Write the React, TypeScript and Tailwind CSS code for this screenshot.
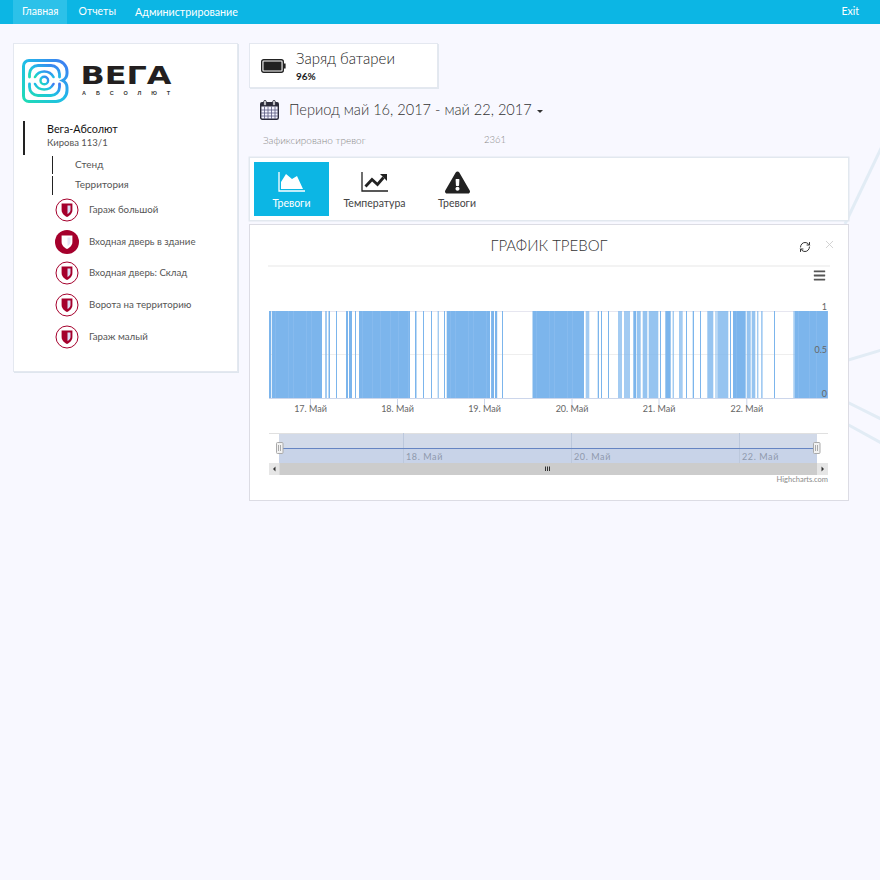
import React from "react";
import { FaExclamationTriangle, FaBars } from "react-icons/fa";
import { RefreshCw, X } from "lucide-react";

const font = { fontFamily: '"Lato","Noto Sans","Open Sans",sans-serif' };

const sensors = [
  { t: "Гараж большой", on: false, cls: "mb-[10px]" },
  { t: "Входная дверь в здание", on: true, cls: "mb-[9px]" },
  { t: "Входная дверь: Склад", on: false, cls: "mb-[10px]" },
  { t: "Ворота на территорию", on: false, cls: "mb-[10px]" },
  { t: "Гараж малый", on: false, cls: "" },
];

const SHIELD = "M6.600 5.500h10.800v6.500c0 3.400-2.500 5.500-5.400 7-2.900-1.500-5.400-3.600-5.400-7z";

function Shield({ on }: { on: boolean }) {
  return (
    <svg width="24" height="24" viewBox="0 0 24 24" className="shrink-0">
      <circle cx="12" cy="12" r={on ? 12 : 11} fill={on ? "#a5002c" : "#fff"} stroke="#a5002c" strokeWidth={on ? 0 : 1} />
      <path d={SHIELD} fill={on ? "#fff" : "#a5002c"} />
      {on ? (
        <path d="M12.500 7.500h3v4.500c0 1.700-1.300 2.900-3 4z" fill="#e4e4f6" />
      ) : (
        <path d="M12.500 7.500h3v4.500c0 1.700-1.300 2.900-3 4z" fill="#dcdcf4" />
      )}
    </svg>
  );
}

function Logo() {
  return (
    <div className="flex items-start">
      <svg width="48" height="44" viewBox="0 0 48 44" className="shrink-0">
        <defs>
          <linearGradient id="lg" x1="0" y1="1" x2="1" y2="0">
            <stop offset="0" stopColor="#1fdcb4" />
            <stop offset="0.5" stopColor="#20bce8" />
            <stop offset="1" stopColor="#4079f2" />
          </linearGradient>
        </defs>
        <g fill="none" stroke="url(#lg)" strokeLinecap="round">
          <path strokeWidth="3" d="M7 1.500h27a11 11 0 0 1 11 11v2a8 8 0 0 1-4.500 7a8 8 0 0 1 4.500 7v3a11 11 0 0 1-11 11H7a5.500 5.500 0 0 1-5.500-5.500V7A5.500 5.500 0 0 1 7 1.500z" />
          <path strokeWidth="2.800" d="M7.500 18v-3a8.500 8.500 0 0 1 8.500-8.500h13a8.500 8.500 0 0 1 8.500 8.500v3" />
          <path strokeWidth="2.800" d="M7.500 25v3a8.500 8.500 0 0 0 8.500 8.500h13a8.500 8.500 0 0 0 8.500-8.500v-3" />
          <path strokeWidth="2.600" d="M13 18a10.500 10.500 0 0 1 18.500 0" />
          <path strokeWidth="2.600" d="M13 25a10.500 10.500 0 0 0 18.500 0" />
          <circle cx="22.300" cy="21.500" r="3.800" strokeWidth="2.400" />
        </g>
      </svg>
      <div className="ml-[10px] mt-[5px] flex flex-col">
        <svg width="94" height="36" viewBox="0 0 94 36" className="overflow-visible">
          <text x="0.500" y="19.500" textLength="91" lengthAdjust="spacingAndGlyphs" fontFamily="DejaVu Sans" fontWeight="700" fontSize="25" fill="#231f20">ВЕГА</text>
          <text x="2" y="31" textLength="88" fontFamily="Liberation Sans" fontSize="5.500" fontWeight="700" fill="#3a3a3a">АБСОЛЮТ</text>
        </svg>
      </div>
    </div>
  );
}

const bars: [number, number, number?][] = [
  [269, 271], [271.8, 322], [325, 327, 0.7], [328.5, 330], [336, 337], [346, 348], [349, 352], [355, 356],
  [359, 410], [415, 416.5], [423, 424], [431, 432], [437.7, 438.7], [444, 445], [446.7, 490], [491, 494], [495, 497.2],
  [502, 503], [532.5, 584], [585.7, 589.3, 0.7], [597.7, 599], [601, 602], [608, 609], [618, 622, 0.7],
  [624, 630, 0.7], [633.3, 636], [636.7, 640.7, 0.8], [642.7, 647.3, 0.8], [648.7, 658.3, 0.8], [660, 661],
  [665.3, 670.7], [672.7, 673.7], [679, 682.7, 0.7], [686, 687], [692.7, 694], [700, 701], [707.3, 713.3, 0.8],
  [715.5, 716.5], [717.3, 728.3, 0.8], [730, 731], [733, 745.7], [746.7, 750.7, 0.8], [751.7, 755.3, 0.8],
  [757.3, 758.3], [761, 762.7, 0.7], [774, 775], [793.3, 794.5, 0.7], [794.5, 828],
];

// thin lighter stripes inside the dense stretches of the series
const stripes: number[] = [];
for (const [a, b] of [[272, 322], [359, 410], [447, 497], [533, 584], [733, 745], [795, 828]] as [number, number][]) {
  for (let x = a + 3; x < b; x += 5 + ((x * 7) % 9)) stripes.push(x);
}

const ticks = [
  { x: 310.5, t: "17. Май" },
  { x: 397.5, t: "18. Май" },
  { x: 484.5, t: "19. Май" },
  { x: 572, t: "20. Май" },
  { x: 659, t: "21. Май" },
  { x: 746.8, t: "22. Май" },
];

function Chart() {
  const ox = 250;
  const oy = 262;
  return (
    <svg width="598" height="224" viewBox={`${ox} ${oy} 598 224`} className="block" fontFamily='"Lato","Noto Sans",sans-serif'>
      <line x1="269" x2="828" y1={311.5} y2={311.5} stroke="#e6e6f0" />
      <line x1="269" x2="828" y1={354.5} y2={354.5} stroke="#eeeeee" />
      {bars.map(([a, b, o], i) => (
        <rect key={i} x={a} y={311} width={b - a} height={88} fill="#7cb5ec" opacity={o ?? 1} />
      ))}
      {stripes.map((x) => (
        <rect key={x} x={x} y={311} width={1} height={88} fill="#8fc0ef" opacity="0.5" />
      ))}
      <line x1="269" x2="828" y1={398.5} y2={398.5} stroke="#ccd6eb" />
      {ticks.map((k) => (
        <g key={k.x}>
          <line x1={k.x} x2={k.x} y1="399" y2="405" stroke="#ccd6eb" />
          <text x={k.x} y="412" textAnchor="middle" fontSize="9" fill="#666">{k.t}</text>
        </g>
      ))}
      <text x="827" y="310" textAnchor="end" fontSize="9" fill="#666">1</text>
      <text x="827" y="353" textAnchor="end" fontSize="9" fill="#666">0.5</text>
      <text x="827" y="397" textAnchor="end" fontSize="9" fill="#666">0</text>

      {/* navigator */}
      <rect x="279" y="433" width="538" height="30" fill="#c8d3e8" />
      <rect x="279" y="433" width="538" height="15" fill="#d2dae9" />
      <rect x="269" y="433" width="559" height="1" fill="#e0e0e0" />
      {[403.5, 571.5, 739.5].map((x) => (
        <line key={x} x1={x} x2={x} y1="433" y2="463" stroke="#bcc8dc" />
      ))}
      {[
        { x: 406, t: "18. Май" },
        { x: 574, t: "20. Май" },
        { x: 742, t: "22. Май" },
      ].map((k) => (
        <text key={k.x} x={k.x} y="460" fontSize="9" letterSpacing="0.6" fill="#8f99ad">{k.t}</text>
      ))}
      <line x1="279" x2="817" y1="448.500" y2="448.500" stroke="#6685c2" strokeWidth="1.200" />
      {[279.5, 816.5].map((x) => (
        <g key={x}>
          <rect x={x - 3} y="442.500" width="6.500" height="11" rx="1" fill="#f2f2f2" stroke="#aaa" />
          <line x1={x - 1} x2={x - 1} y1="445" y2="451" stroke="#aaa" />
          <line x1={x + 1} x2={x + 1} y1="445" y2="451" stroke="#aaa" />
        </g>
      ))}
      {/* scrollbar */}
      <rect x="269" y="463" width="559" height="12" fill="#cccccc" />
      <rect x="269" y="463" width="10.500" height="12" fill="#e6e6e6" />
      <rect x="817" y="463" width="11" height="12" fill="#e6e6e6" />
      <path d="M275.500 466.500v5l-2.500-2.500z" fill="#333" />
      <path d="M821.500 466.500v5l2.500-2.500z" fill="#333" />
      <path d="M545.500 466.500v4.500M547.500 466.500v4.500M549.500 466.500v4.500" stroke="#333" />
      <text x="828" y="481.500" textAnchor="end" fontSize="7.500" fill="#8a8a8a">Highcharts.com</text>
    </svg>
  );
}

function CalendarIcon() {
  return (
    <svg width="19" height="20" viewBox="0 0 19 20" className="shrink-0">
      <rect x="0.700" y="2.700" width="17.600" height="16.600" rx="1.500" fill="#f4f4ff" stroke="#2b2b3a" strokeWidth="1.400" />
      <rect x="0.700" y="2.700" width="17.600" height="3.800" fill="#2b2b3a" />
      <rect x="3.800" y="0.500" width="2.400" height="5" rx="1" fill="#fff" stroke="#2b2b3a" strokeWidth="1" />
      <rect x="12.800" y="0.500" width="2.400" height="5" rx="1" fill="#fff" stroke="#2b2b3a" strokeWidth="1" />
      <path d="M1 10h17M1 13h17M1 16h17M4.500 6.500v12.500M8 6.500v12.500M11.500 6.500v12.500M15 6.500v12.500" stroke="#5a5a82" strokeWidth="0.800" />
    </svg>
  );
}

function AreaIcon() {
  return (
    <svg width="28" height="22" viewBox="0 0 28 22" className="shrink-0">
      <path d="M1 1v19h26" fill="none" stroke="currentColor" strokeWidth="1.300" />
      <path d="M3 18v-7l5-8 6 5 5-3 6 13z" fill="currentColor" />
    </svg>
  );
}

function LineIcon() {
  return (
    <svg width="28" height="22" viewBox="0 0 28 22" className="shrink-0">
      <path d="M1 1v19h26" fill="none" stroke="#222" strokeWidth="1.300" />
      <path d="M4.500 15.500l6.500-7 5.500 5 6-7" fill="none" stroke="#222" strokeWidth="2.800" />
      <path d="M19 3h7v7z" fill="#222" />
    </svg>
  );
}

export default function App() {
  return (
    <div className="relative min-h-[880px] w-[880px] overflow-hidden bg-[#f8f8ff] text-[#333]" style={font}>
      {/* background rays */}
      <svg width="880" height="880" className="absolute left-0 top-0" viewBox="0 0 880 880">
        <g stroke="#e2ecf5" strokeWidth="3" fill="none">
          <path d="M885 140L845 224" />
          <path d="M845 361L885 349" />
          <path d="M845 401L885 421" />
          <path d="M845 423L885 445" />
        </g>
      </svg>

      <nav className="relative flex h-6 items-stretch bg-[#0cb6e4] pl-[13px] pr-[21px] text-[10.500px] text-white">
        <div className="flex items-center bg-[#2cc1e9] pl-[9px] pr-[8px]">Главная</div>
        <div className="flex items-center pl-[12px] pr-[19px]">Отчеты</div>
        <div className="flex items-center text-[10.700px]">Администрирование</div>
        <div className="ml-auto flex items-center">Exit</div>
      </nav>

      <div className="relative flex items-start pl-[14px] pt-[20px]">
        {/* left panel */}
        <aside className="h-[327px] w-[223px] shrink-0 bg-white pl-[8px] pt-[15px] shadow-[0_0_0_1px_#e4e8f0,1px_1px_0_1px_#dfe6ee]">
          <Logo />
          <div className="ml-[1px] mt-[18px] h-[34px] border-l-2 border-[#222] pl-[22px]">
            <div className="text-[10.800px] leading-[15px] text-[#111]">Вега-Абсолют</div>
            <div className="text-[9.500px] leading-[13px] text-[#555]">Кирова 113/1</div>
          </div>
          <div className="ml-[30px] mt-[1px] h-[18px] border-l border-[#222] pl-[22px] text-[10px] leading-[16px] text-[#555]">Стенд</div>
          <div className="ml-[30px] mt-[2px] h-[19px] border-l border-[#222] pl-[22px] text-[10px] leading-[16px] text-[#555]">Территория</div>
          <div className="ml-[33px] mt-[4px] flex flex-col">
            {sensors.map((s) => (
              <div key={s.t} className={`flex h-[22px] items-center ${s.cls}`}>
                <Shield on={s.on} />
                <span className="ml-[10px] -translate-y-[1px] text-[9.700px] text-[#555]">{s.t}</span>
              </div>
            ))}
          </div>
        </aside>

        {/* right column */}
        <main className="ml-[12px] flex w-[600px] flex-col">
          <div className="ml-[1px] flex h-[43px] w-[187px] items-start bg-white pl-[11px] shadow-[0_0_0_1px_#e4e8f0,1px_1px_0_1px_#e2e8ef]">
            <svg width="25" height="14" viewBox="0 0 25 14" className="mt-[15px] shrink-0">
              <rect x="0.700" y="0.700" width="21.600" height="12.600" rx="2" fill="#fff" stroke="#222" strokeWidth="1.400" />
              <rect x="2.500" y="2.500" width="18" height="9" fill="#222" />
              <rect x="23" y="4.500" width="1.600" height="5" fill="#222" />
            </svg>
            <div className="ml-[10px] flex flex-col pt-[4px]">
              <span className="text-[15px] font-light leading-[20px] text-[#222]">Заряд батареи</span>
              <span className="mt-[1px] text-[10px] font-bold leading-[14px] text-[#222]">96%</span>
            </div>
          </div>

          <div className="ml-[11px] mt-[11px] flex h-[24px] items-center">
            <CalendarIcon />
            <span className="ml-[10px] text-[14.600px] font-light text-[#333]">Период май 16, 2017 - май 22, 2017</span>
            <span className="ml-[5px] mt-[2px] border-x-[3px] border-t-[3px] border-x-transparent border-t-[#333]" />
          </div>

          <div className="ml-[14px] mt-[9px] flex h-[18px] items-center text-[10px] font-light text-[#888]">
            <span className="w-[221px]">Зафиксировано тревог</span>
            <span className="text-[9.500px]">2361</span>
          </div>

          <div className="ml-[1px] mt-[9px] flex h-[62px] w-[598px] items-center bg-white pl-[4px] shadow-[0_0_0_1.500px_#e2e8ef]">
            <div className="flex h-[54px] w-[75px] flex-col items-center bg-[#0cb6e4] pt-[9px] text-white">
              <AreaIcon />
              <span className="mt-[3px] text-[10.500px]">Тревоги</span>
            </div>
            <div className="flex h-[54px] w-[91px] flex-col items-center pt-[9px]">
              <LineIcon />
              <span className="mt-[3px] text-[10.500px] text-[#444]">Температура</span>
            </div>
            <div className="flex h-[54px] w-[74px] flex-col items-center pt-[8px] text-[#222]">
              <FaExclamationTriangle size={25} />
              <span className="mt-[1px] text-[10.500px] text-[#444]">Тревоги</span>
            </div>
          </div>

          <div className="mt-[4px] h-[277px] w-[600px] border border-[#dcdce4] bg-white">
            <div className="relative mx-[18px] h-[42px] border-b-2 border-[#f3f3f3]">
              <div className="pt-[10px] text-center text-[15px] font-light leading-[20px] text-[#333]">ГРАФИК ТРЕВОГ</div>
              <RefreshCw className="absolute right-[19px] top-[16px] text-[#333]" size={12} strokeWidth={2} />
              <X className="absolute right-[-6px] top-[13px] text-[#ccc]" size={13} strokeWidth={1.6} />
              <FaBars className="absolute right-[4px] top-[44px] text-[#555]" size={13} />
            </div>
            <div className="mt-[-5px]">
              <Chart />
            </div>
          </div>
        </main>
      </div>
    </div>
  );
}
